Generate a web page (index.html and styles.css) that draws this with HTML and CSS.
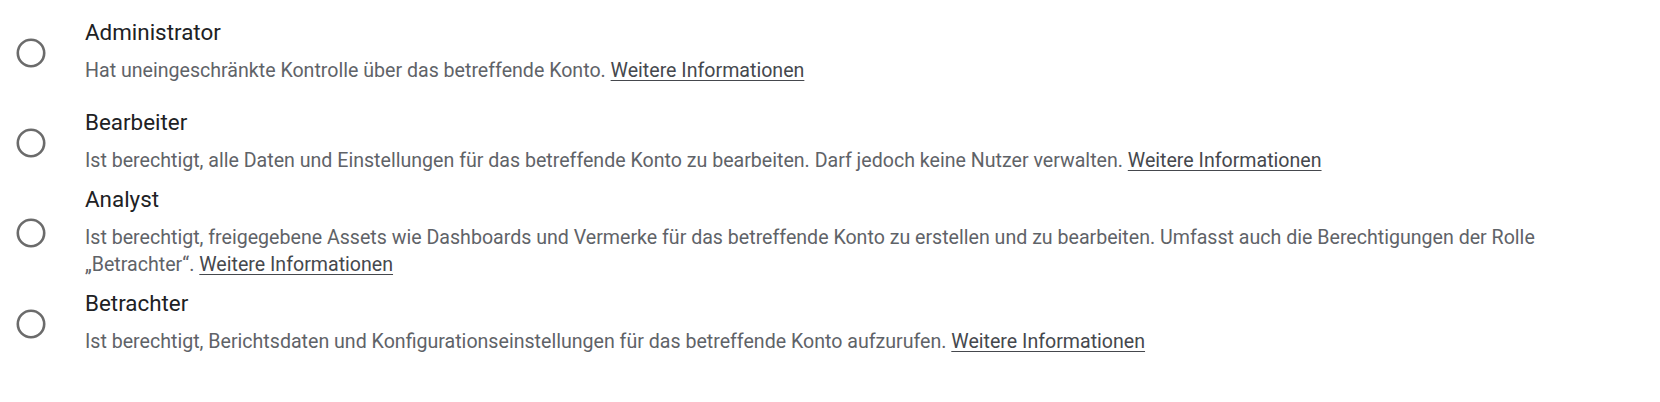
FILE: index.html
```html
<!DOCTYPE html>
<html lang="de">
<head>
<meta charset="utf-8">
<title>Rollen</title>
<link rel="stylesheet" href="styles.css">
</head>
<body>
<div class="role-list">
  <div class="role role-first">
    <div class="radio"><svg viewBox="0 0 30 30" width="30" height="30"><circle cx="15" cy="15" r="13.2" fill="none" stroke="currentColor" stroke-width="2.6"/></svg></div>
    <div class="role-text">
      <div class="role-title">Administrator</div>
      <div class="role-desc">Hat uneingeschränkte Kontrolle über das betreffende Konto. <a href="#">Weitere Informationen</a></div>
    </div>
  </div>
  <div class="role">
    <div class="radio"><svg viewBox="0 0 30 30" width="30" height="30"><circle cx="15" cy="15" r="13.2" fill="none" stroke="currentColor" stroke-width="2.6"/></svg></div>
    <div class="role-text">
      <div class="role-title">Bearbeiter</div>
      <div class="role-desc">Ist berechtigt, alle Daten und Einstellungen für das betreffende Konto zu bearbeiten. Darf jedoch keine Nutzer verwalten. <a href="#">Weitere Informationen</a></div>
    </div>
  </div>
  <div class="role">
    <div class="radio"><svg viewBox="0 0 30 30" width="30" height="30"><circle cx="15" cy="15" r="13.2" fill="none" stroke="currentColor" stroke-width="2.6"/></svg></div>
    <div class="role-text">
      <div class="role-title">Analyst</div>
      <div class="role-desc">Ist berechtigt, freigegebene Assets wie Dashboards und Vermerke für das betreffende Konto zu erstellen und zu bearbeiten. Umfasst auch die Berechtigungen der Rolle „Betrachter“. <a href="#">Weitere Informationen</a></div>
    </div>
  </div>
  <div class="role">
    <div class="radio"><svg viewBox="0 0 30 30" width="30" height="30"><circle cx="15" cy="15" r="13.2" fill="none" stroke="currentColor" stroke-width="2.6"/></svg></div>
    <div class="role-text">
      <div class="role-title">Betrachter</div>
      <div class="role-desc">Ist berechtigt, Berichtsdaten und Konfigurationseinstellungen für das betreffende Konto aufzurufen. <a href="#">Weitere Informationen</a></div>
    </div>
  </div>
</div>
</body>
</html>
```

FILE: styles.css
```css
html, body {
  margin: 0;
  padding: 0;
  background: #ffffff;
}

body {
  font-family: Roboto, "Liberation Sans", Arial, sans-serif;
  -webkit-font-smoothing: antialiased;
}

.role-list {
  display: flex;
  flex-direction: column;
  gap: 10px;
  padding: 17px 40px 0 0;
}

.role {
  display: flex;
  align-items: center;
}

.role-first {
  margin-bottom: 13px;
}

.radio {
  flex: 0 0 85px;
  display: flex;
  padding-left: 16px;
  padding-top: 4px;
  box-sizing: border-box;
  color: #6b6b6b;
}

.radio svg {
  display: block;
}

.role-text {
  flex: 1 1 auto;
  min-width: 0;
}

.role-title {
  font-size: 22.4px;
  line-height: 30px;
  color: #202124;
  margin-bottom: 10px;
}

.role-desc {
  font-size: 19.6px;
  line-height: 27px;
  color: #5f6368;
}

.role-desc a {
  color: #45484d;
  text-decoration: underline;
  text-underline-offset: 3px;
}
```
